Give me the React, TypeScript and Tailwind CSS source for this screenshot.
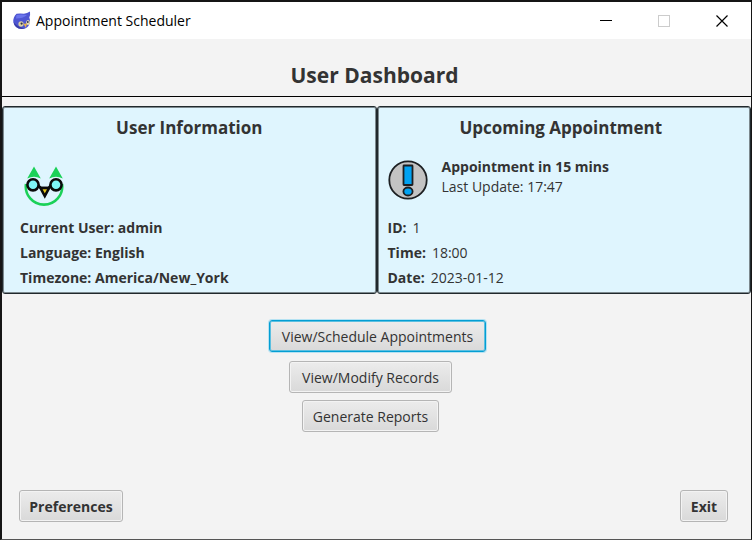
import type { ButtonHTMLAttributes, ReactNode } from 'react';
import { clsx } from 'clsx';

function AppLogo() {
  return (
    <svg viewBox="0 0 18 20" className="h-5 w-[18px]" aria-hidden="true">
      <path d="M3.500 2.800 Q7 2 11 2.800 Q14 2.500 17 0.500 Q17.500 4 16.300 6.500 Q17.500 9 16.800 12 Q15 18 8.800 18 Q1.500 17.800 0.300 11 Q0 6 3.500 2.800 Z" fill="#4e55d2" />
      <path d="M0.500 11 Q4 15.500 11.500 17.500 Q3 19.500 0.500 11 Z" fill="#3a3da3" />
      <path d="M3.500 4 Q8 3 14 4 Q10 7.500 3 7.500 Z" fill="#6a74ec" />
      <ellipse cx="8" cy="13" rx="2.600" ry="2.700" fill="#d8cfa4" />
      <ellipse cx="15" cy="11.500" rx="1.900" ry="2.500" fill="#e4dcb0" />
      <circle cx="8.600" cy="12.600" r="1.100" fill="#30304c" />
      <circle cx="14.800" cy="11" r="0.900" fill="#30304c" />
      <path d="M10.500 12.800 L14 12.500 L12.800 16.800 Z" fill="#f2b541" />
    </svg>
  );
}

function OwlIcon() {
  return (
    <svg viewBox="0 0 40 40" className="h-10 w-10" aria-hidden="true">
      <path d="M2 18 A18.200 18 0 1 0 38 18" fill="none" stroke="#1bd158" strokeWidth="2.600" />
      <path d="M10 0.500 L16.800 12.500 Q10 9 3.200 12.500 Z" fill="#1bd158" />
      <path d="M32 0.500 L38.800 12.500 Q32 9 25.200 12.500 Z" fill="#1bd158" />
      <circle cx="9" cy="18.800" r="5.600" fill="#7ff6f8" stroke="#0b0b0b" strokeWidth="2.600" />
      <circle cx="32" cy="18.800" r="5.600" fill="#7ff6f8" stroke="#0b0b0b" strokeWidth="2.600" />
      <path d="M14 19.500 L17 22 H24.500 L27 19.500" fill="none" stroke="#0b0b0b" strokeWidth="2.600" />
      <path d="M16.500 22 H25.100 L20.800 30 Z" fill="#e6c61c" stroke="#0b0b0b" strokeWidth="2.600" />
    </svg>
  );
}

function AlertIcon() {
  return (
    <svg viewBox="0 0 40 40" className="h-10 w-10" aria-hidden="true">
      <circle cx="20" cy="20" r="18.700" fill="#c3c3c3" stroke="#1c1f22" strokeWidth="1.800" />
      <rect x="15.500" y="5.500" width="9" height="19.500" rx="0.500" fill="#00a2f2" stroke="#1c1f22" strokeWidth="1.800" />
      <ellipse cx="20" cy="31.500" rx="4.600" ry="4" fill="#00a2f2" stroke="#1c1f22" strokeWidth="1.800" />
    </svg>
  );
}

function CaptionButton({ label, children }: { label: string; children: ReactNode }) {
  return (
    <button type="button" aria-label={label} className="flex h-full w-[58px] items-center justify-center">
      <svg viewBox="0 0 12 12" className="h-3 w-3" fill="none" aria-hidden="true">
        {children}
      </svg>
    </button>
  );
}

function Button({ className, ...props }: ButtonHTMLAttributes<HTMLButtonElement>) {
  return (
    <button
      type="button"
      className={clsx(
        'h-8 rounded-[3px] border bg-linear-to-b from-[#ececec] to-[#d9d9d9] text-center whitespace-nowrap',
        className,
      )}
      {...props}
    />
  );
}

const plain = 'border-[#b5b5b5] shadow-[inset_0_0_0_1px_#f3f3f3]';

function Panel({ title, className, children }: { title: string; className: string; children: ReactNode }) {
  return (
    <section
      className={clsx(
        'rounded-[3px] border border-[#20282c] bg-[#dff5fe] pt-[9px] pb-[3px] shadow-[inset_0_0_0_1px_#7d898e]',
        className,
      )}
    >
      <h2 className="text-center text-[17px] leading-6 font-bold">{title}</h2>
      {children}
    </section>
  );
}

function Field({ label, value }: { label: string; value: string }) {
  return (
    <div className="flex gap-1.5">
      <dt className="font-bold">{label}</dt>
      <dd>{value}</dd>
    </div>
  );
}

export default function App() {
  return (
    <div className="flex min-h-screen flex-col border-t-2 border-r border-b border-l-2 border-[#151515] border-b-[#555555] bg-[#f3f3f3] font-['Open_Sans','Noto_Sans',sans-serif] text-[14px] text-[#333333]">
      <header className="flex h-[37px] items-center bg-white pl-[11px] text-black">
        <AppLogo />
        <span className="ml-[5px] flex-1">Appointment Scheduler</span>
        <div className="flex h-full">
          <CaptionButton label="Minimize">
            <path d="M0 5.500 H12" stroke="#000000" />
          </CaptionButton>
          <CaptionButton label="Maximize">
            <rect x="0.500" y="0.500" width="11" height="11" stroke="#cccccc" />
          </CaptionButton>
          <CaptionButton label="Close">
            <path d="M0.500 0.500 L11.500 11.500 M11.500 0.500 L0.500 11.500" stroke="#000000" strokeWidth="1.200" />
          </CaptionButton>
        </div>
      </header>

      <h1 className="border-b border-black pt-5 pr-1 pb-[5px] text-center text-[21px] leading-8 font-bold">
        User Dashboard
      </h1>

      <main className="flex flex-1 flex-col pt-[9px]">
        <div className="grid grid-cols-2">
          <Panel title="User Information" className="px-[17px]">
            <div className="flex h-[75px] items-center pt-4 pl-1">
              <OwlIcon />
            </div>
            <div className="leading-[25px] font-bold">
              <p>Current User: admin</p>
              <p>Language: English</p>
              <p>Timezone: America/New_York</p>
            </div>
          </Panel>
          <Panel title="Upcoming Appointment" className="pr-4 pl-2.5">
            <div className="flex h-[75px] items-start gap-3.5 pt-4">
              <div className="pt-1">
                <AlertIcon />
              </div>
              <div className="pt-px leading-5">
                <p className="font-bold">Appointment in 15 mins</p>
                <p>Last Update: 17:47</p>
              </div>
            </div>
            <dl className="leading-[25px]">
              <Field label="ID:" value="1" />
              <Field label="Time:" value="18:00" />
              <Field label="Date:" value="2023-01-12" />
            </dl>
          </Panel>
        </div>

        <div className="mt-[26px] flex flex-col items-center pl-0.5">
          <Button className="w-[217px] border-[#039ed3] shadow-[0_0_0_1px_#b5e2f2,inset_0_0_0_1px_#5bbfe0]">
            View/Schedule Appointments
          </Button>
          <div className="mt-[9px] flex flex-col items-center gap-[7px] pr-3.5">
            <Button className={clsx(plain, 'w-[163px]')}>View/Modify Records</Button>
            <Button className={clsx(plain, 'w-[137px]')}>Generate Reports</Button>
          </div>
        </div>

        <div className="mt-auto flex justify-between pr-[23px] pb-[17px] pl-[17px]">
          <Button className={clsx(plain, 'w-[104px] font-bold')}>Preferences</Button>
          <Button className={clsx(plain, 'w-12 font-bold')}>Exit</Button>
        </div>
      </main>
    </div>
  );
}
